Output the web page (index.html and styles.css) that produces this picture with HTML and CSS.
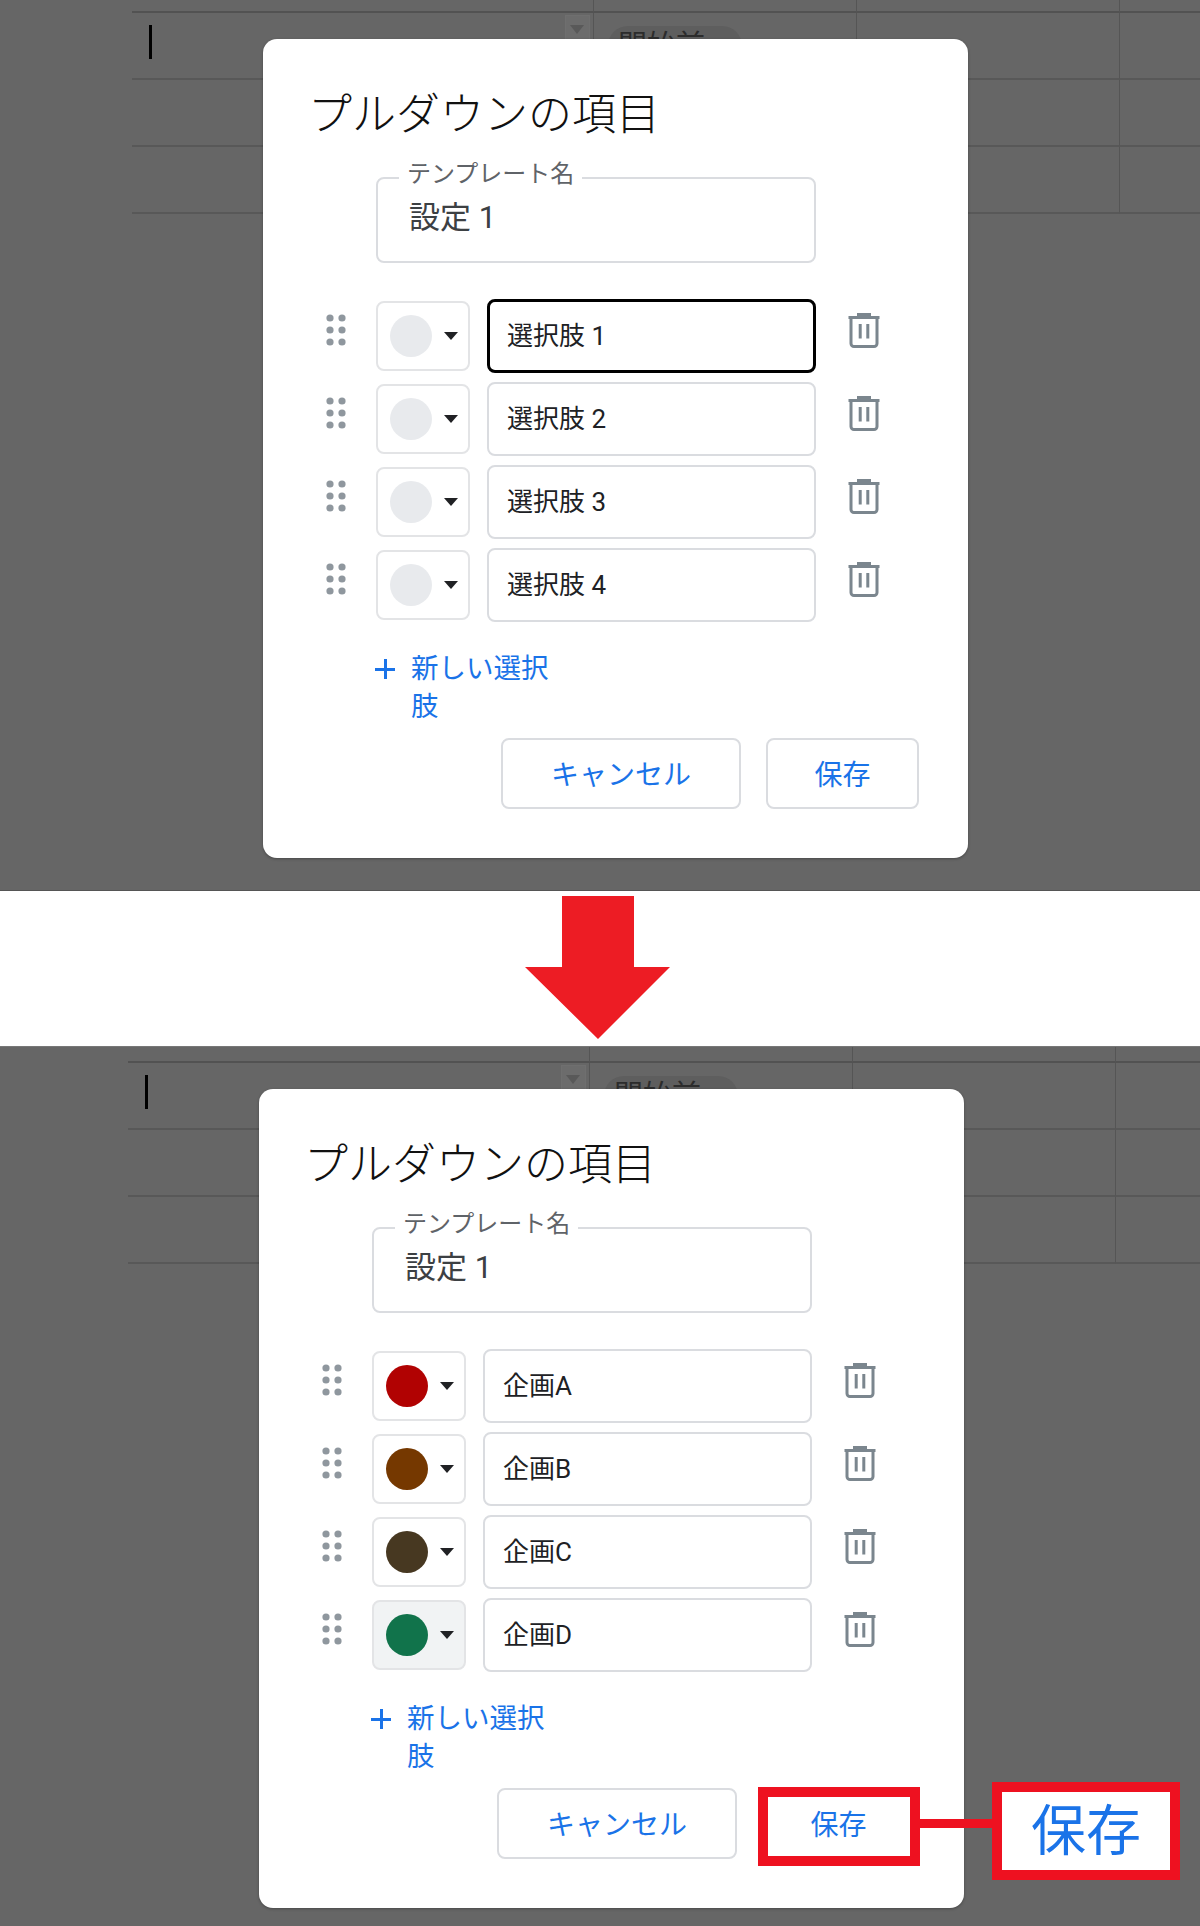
FILE: index.html
```html
<!DOCTYPE html>
<html lang="ja">
<head>
<meta charset="utf-8">
<title>プルダウンの項目</title>
<link rel="stylesheet" href="styles.css">
</head>
<body>
<svg class="sprite" aria-hidden="true">
  <symbol id="dots" viewBox="0 0 20 32"><circle cx="4" cy="4" r="3.6"/><circle cx="16" cy="4" r="3.6"/><circle cx="4" cy="16" r="3.6"/><circle cx="16" cy="16" r="3.6"/><circle cx="4" cy="28" r="3.6"/><circle cx="16" cy="28" r="3.6"/></symbol>
  <symbol id="trash" viewBox="0 0 32 35"><path d="M0.5 4.5H31.5M10.5 4V1.500H21.500V4M3 5V30.500A3 3 0 0 0 6 33.500H26A3 3 0 0 0 29 30.500V5M12.200 11V25.500M19.800 11V25.500"/></symbol>
</svg>

<section class="panel panel-before">
  <div class="sheet">
    <div class="cell head"></div><div class="cell head"></div><div class="cell head"></div><div class="cell head last"></div>
    <div class="cell first"><i class="cursor"></i><span class="select"><i></i></span></div>
    <div class="cell"><span class="chip">開始前</span></div><div class="cell"></div><div class="cell last"></div>
    <div class="cell"></div><div class="cell"></div><div class="cell"></div><div class="cell last"></div>
    <div class="cell"></div><div class="cell"></div><div class="cell"></div><div class="cell last"></div>
  </div>
  <div class="modal">
    <h2 class="title">プルダウンの項目</h2>
    <div class="name-field"><span class="name-label">テンプレート名</span><span class="name-value">設定 1</span></div>
    <div class="rows">
      <div class="row"><svg class="drag"><use href="#dots"/></svg><div class="color"><i class="dot"></i><i class="caret"></i></div><div class="option focus">選択肢 1</div><svg class="trash"><use href="#trash"/></svg></div>
      <div class="row"><svg class="drag"><use href="#dots"/></svg><div class="color"><i class="dot"></i><i class="caret"></i></div><div class="option">選択肢 2</div><svg class="trash"><use href="#trash"/></svg></div>
      <div class="row"><svg class="drag"><use href="#dots"/></svg><div class="color"><i class="dot"></i><i class="caret"></i></div><div class="option">選択肢 3</div><svg class="trash"><use href="#trash"/></svg></div>
      <div class="row"><svg class="drag"><use href="#dots"/></svg><div class="color"><i class="dot"></i><i class="caret"></i></div><div class="option">選択肢 4</div><svg class="trash"><use href="#trash"/></svg></div>
    </div>
    <div class="add"><span class="plus"></span><span class="add-text">新しい選択肢</span></div>
    <div class="actions"><span class="btn cancel">キャンセル</span><span class="btn save">保存</span></div>
  </div>
</section>

<div class="divider">
  <svg class="arrow" viewBox="0 0 145 143"><polygon points="37,0 109,0 109,71 145,71 73,143 0,71 37,71"/></svg>
</div>

<section class="panel panel-after">
  <div class="sheet">
    <div class="cell head"></div><div class="cell head"></div><div class="cell head"></div><div class="cell head last"></div>
    <div class="cell first"><i class="cursor"></i><span class="select"><i></i></span></div>
    <div class="cell"><span class="chip">開始前</span></div><div class="cell"></div><div class="cell last"></div>
    <div class="cell"></div><div class="cell"></div><div class="cell"></div><div class="cell last"></div>
    <div class="cell"></div><div class="cell"></div><div class="cell"></div><div class="cell last"></div>
  </div>
  <div class="modal">
    <h2 class="title">プルダウンの項目</h2>
    <div class="name-field"><span class="name-label">テンプレート名</span><span class="name-value">設定 1</span></div>
    <div class="rows">
      <div class="row"><svg class="drag"><use href="#dots"/></svg><div class="color"><i class="dot red"></i><i class="caret"></i></div><div class="option">企画A</div><svg class="trash"><use href="#trash"/></svg></div>
      <div class="row"><svg class="drag"><use href="#dots"/></svg><div class="color"><i class="dot orange"></i><i class="caret"></i></div><div class="option">企画B</div><svg class="trash"><use href="#trash"/></svg></div>
      <div class="row"><svg class="drag"><use href="#dots"/></svg><div class="color"><i class="dot brown"></i><i class="caret"></i></div><div class="option">企画C</div><svg class="trash"><use href="#trash"/></svg></div>
      <div class="row"><svg class="drag"><use href="#dots"/></svg><div class="color hover"><i class="dot green"></i><i class="caret"></i></div><div class="option">企画D</div><svg class="trash"><use href="#trash"/></svg></div>
    </div>
    <div class="add"><span class="plus"></span><span class="add-text">新しい選択肢</span></div>
    <div class="actions"><span class="btn cancel">キャンセル</span><span class="btn save">保存</span></div>
  </div>
  <div class="mark mark-button"></div>
  <div class="mark-link"></div>
  <div class="mark mark-zoom">保存</div>
</section>
</body>
</html>
```

FILE: styles.css
```css
* { box-sizing: border-box; }

html, body { margin: 0; padding: 0; }

body {
  width: 1200px;
  height: 1926px;
  background: #fff;
  font-family: Roboto, "Noto Sans CJK JP", sans-serif;
  overflow: hidden;
}

.sprite { display: none; }

.panel {
  position: relative;
  overflow: hidden;
  background: #666;
}
.panel-before { height: 891px; border-bottom: 1px solid #555; }
.panel-after { height: 880px; border-top: 1px solid #777; }

.sheet {
  display: grid;
  grid-template-columns: 462px 263px 263px 1fr;
  grid-template-rows: 13px 67px 67px 67px;
  margin-left: 132px;
}
.panel-after .sheet {
  grid-template-rows: 16px 67px 67px 67px;
  margin-left: 128px;
}

.cell {
  position: relative;
  border-right: 1px solid #555;
  border-bottom: 2px solid #585858;
}
.cell.last { border-right: 0; }
.cell.head { border-bottom-color: #525252; }

.cursor {
  position: absolute;
  left: 17px;
  top: 12px;
  width: 3px;
  height: 34px;
  background: #000;
}

.select {
  position: absolute;
  right: 3px;
  top: 2px;
  width: 25px;
  height: 30px;
  background: #6c6c6c;
  border: 1px solid #6f6f6f;
}
.select i {
  position: absolute;
  left: 4px;
  top: 9px;
  border-style: solid;
  border-width: 9px 7px 0;
  border-color: #595959 transparent transparent;
}

.chip {
  position: absolute;
  left: 14px;
  top: 13px;
  padding: 0 37px 6px 10px;
  border-radius: 20px;
  background: #5e5e5e;
  color: #2c2c2c;
  font-size: 29px;
  line-height: 40px;
  white-space: nowrap;
}

.modal {
  position: absolute;
  left: 263px;
  top: 39px;
  width: 705px;
  height: 819px;
  padding: 51px 49px 50px 51px;
  background: #fff;
  border-radius: 14px;
  box-shadow: 0 1px 3px rgba(0, 0, 0, 0.3);
}
.panel-after .modal { left: 259px; top: 42px; }

.title {
  margin: 0 0 0 -6px;
  height: 50px;
  color: #111;
  font-size: 44px;
  font-weight: 300;
  line-height: 50px;
  white-space: nowrap;
}

.name-field {
  position: relative;
  width: 440px;
  height: 86px;
  margin: 37px 0 36px 62px;
  padding: 21px 0 0 31px;
  border: 2px solid #dadce0;
  border-radius: 8px;
}
.name-label {
  position: absolute;
  left: 21px;
  top: -20px;
  padding: 0 8px;
  background: #fff;
  color: #5f6368;
  font-size: 24px;
  line-height: 30px;
  white-space: nowrap;
}
.name-value {
  display: block;
  color: #3c4043;
  font-size: 31px;
  line-height: 36px;
}

.rows {
  display: flex;
  flex-direction: column;
  gap: 9px;
}

.row {
  display: grid;
  grid-template-columns: 45px 94px 329px 32px;
  column-gap: 17px;
  height: 74px;
}

.drag {
  width: 20px;
  height: 32px;
  margin: 15px 0 0 12px;
  fill: #8f979e;
}

.color {
  display: flex;
  align-items: center;
  height: 70px;
  margin-top: 2px;
  padding-left: 12px;
  border: 2px solid #e3e4e6;
  border-radius: 8px;
}
.color.hover { background: #f1f3f4; }

.dot {
  flex: none;
  width: 42px;
  height: 42px;
  border-radius: 50%;
  background: #e8eaed;
}
.dot.red { background: #b10202; }
.dot.orange { background: #753800; }
.dot.brown { background: #473821; }
.dot.green { background: #11734b; }

.caret {
  margin-left: 12px;
  border-style: solid;
  border-width: 8px 7.500px 0;
  border-color: #202124 transparent transparent;
}

.option {
  display: flex;
  align-items: center;
  padding: 0 0 5px 18px;
  border: 2px solid #dadce0;
  border-radius: 8px;
  color: #202124;
  font-size: 26px;
  white-space: nowrap;
}
.option.focus { border: 3px solid #000; padding-left: 17px; }

.trash {
  width: 32px;
  height: 35px;
  margin: 14px 0 0 15px;
  fill: none;
  stroke: #7b868e;
  stroke-width: 3;
}

.add {
  display: flex;
  align-items: flex-start;
  width: 200px;
  margin: 28px 0 12px 61px;
  color: #1a73e8;
}
.plus {
  position: relative;
  flex: none;
  width: 20px;
  height: 20px;
  margin: 9px 16px 0 0;
  background:
    linear-gradient(#1a73e8, #1a73e8) center / 20px 3px no-repeat,
    linear-gradient(#1a73e8, #1a73e8) center / 3px 20px no-repeat;
}
.add-text {
  width: 150px;
  font-size: 27.500px;
  line-height: 38px;
}

.actions {
  display: flex;
  justify-content: flex-end;
  gap: 25px;
}
.btn {
  display: flex;
  align-items: center;
  justify-content: center;
  height: 71px;
  padding-bottom: 2px;
  border: 2px solid #dadce0;
  border-radius: 8px;
  color: #1a73e8;
  font-size: 28px;
}
.cancel { width: 240px; }
.save { width: 153px; }

.arrow {
  display: block;
  width: 145px;
  height: 143px;
  fill: #ed1c24;
}

.divider {
  height: 155px;
  padding: 5px 0 0 525px;
}

.mark {
  position: absolute;
  border: 10px solid #ee1120;
}
.mark-button {
  left: 758px;
  top: 740px;
  width: 162px;
  height: 79px;
}
.mark-link {
  position: absolute;
  left: 920px;
  top: 772px;
  width: 72px;
  height: 9px;
  background: #ee1120;
}
.mark-zoom {
  left: 992px;
  top: 735px;
  width: 188px;
  height: 98px;
  display: flex;
  align-items: center;
  justify-content: center;
  background: #fff;
  color: #1a73e8;
  font-size: 55px;
  line-height: 1;
}
```
